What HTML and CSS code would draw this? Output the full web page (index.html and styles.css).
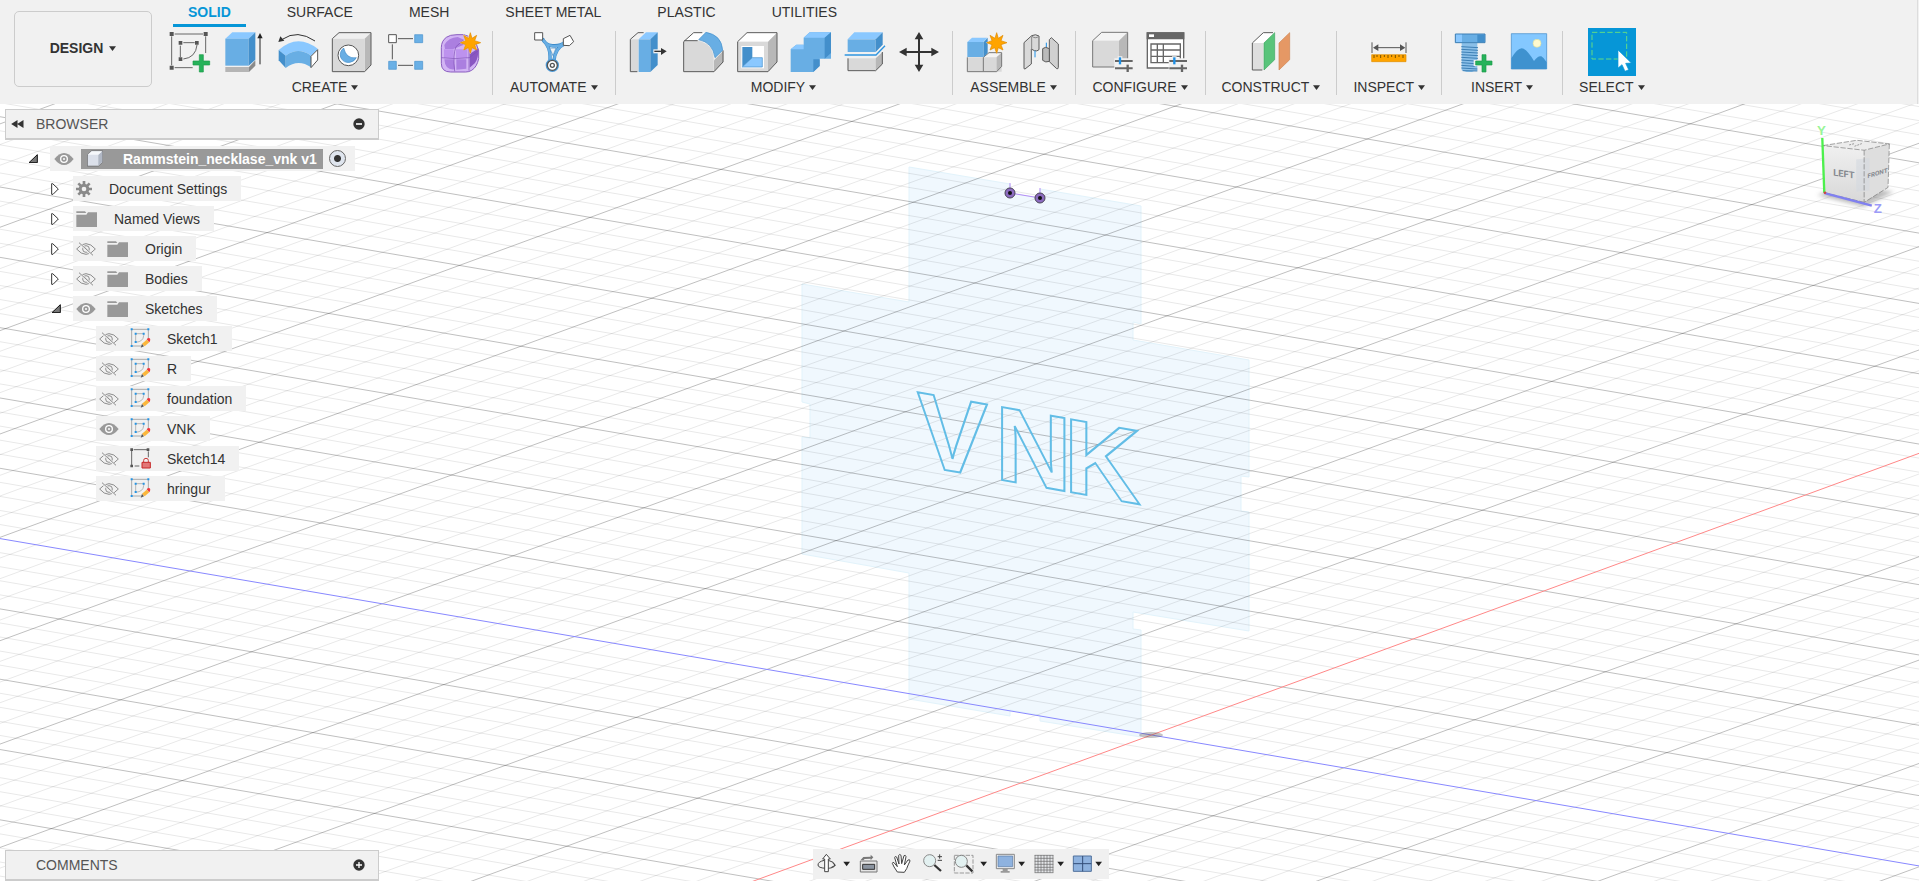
FILE: index.html
```
<!DOCTYPE html>
<html lang="en">
<head>
<meta charset="utf-8">
<title>Rammstein_necklase_vnk v1</title>
<link rel="stylesheet" href="styles.css">
</head>
<body>
<svg class="defs" aria-hidden="true">
  <symbol id="arrow" viewBox="0 0 18 14" preserveAspectRatio="none"><path d="M0 1h18L9 14z" fill="#333"/></symbol>
  <symbol id="open" viewBox="0 0 30 27"><path d="M28 2v24H3z" fill="#777" stroke="#111" stroke-width="3"/></symbol>
  <symbol id="closed" viewBox="0 0 24 36"><path d="M2 2v32h4L22 18 5 2z" fill="#fff" stroke="#333" stroke-width="3"/></symbol>
  <symbol id="eye" viewBox="0 0 60 40"><path d="M1 20Q15 2 30 2t29 18Q45 38 30 38T1 20z" fill="#999"/><circle cx="30" cy="20" r="10" fill="none" stroke="#fff" stroke-width="4"/><circle cx="30" cy="20" r="3" fill="#fff"/></symbol>
  <symbol id="eye-off" viewBox="0 0 60 40"><g fill="none" stroke="#8c8c8c" stroke-width="3"><path d="M2 20Q15 4 30 4t28 16Q45 36 30 36T2 20z"/><circle cx="30" cy="20" r="10"/><path d="M25 13l13 14"/></g><path d="M10 2l38 36" stroke="#f1f1f1" stroke-width="7"/><path d="M9 1l42 38" stroke="#8c8c8c" stroke-width="3"/></symbol>
  <symbol id="folder" viewBox="0 0 63 48"><path d="M1 1h26l4 5H1zM1 11h30l5-7h27v44H1z" fill="#999"/></symbol>
  <symbol id="gear" viewBox="0 0 48 48"><g stroke="#8a8a8a" stroke-width="8"><path d="M24 0v48M0 24h48M7 7l34 34M41 7L7 41"/></g><circle cx="24" cy="24" r="16" fill="#8a8a8a"/><circle cx="24" cy="24" r="7" fill="#f1f1f1"/></symbol>
  <symbol id="sketch" viewBox="388 56 63 63"><path d="M393 61v49M393 60h49M443 61v30M393 110h28" fill="none" stroke="#aaa" stroke-width="3"/><path d="M405 73h24v6q-1 18-24 20z" fill="none" stroke="#999" stroke-width="2"/><g fill="#2494e4"><path d="M390 57h6v6h-6zM440 57h6v6h-6zM390 107h6v6h-6zM402 70h6v6h-6zM426 70h6v6h-6zM402 95h6v6h-6z"/></g><path d="M420 115l4-12 6 8z" fill="#555"/><path d="M424 103l14-12 8 8-14 12z" fill="#fbb73c"/><path d="M438 90q5-6 9-3 4 4-1 12z" fill="#f0373c"/></symbol>
  <symbol id="sketch-locked" viewBox="388 56 63 63"><path d="M393 63v45M399 61h40M443 66v18M402 110h14" fill="none" stroke="#666" stroke-width="3"/><g fill="#555"><path d="M389 57h8v8h-8zM438 57h8v8h-8zM389 106h8v8h-8z"/></g><path d="M429 99v-6q0-6 7-6t7 6v6" fill="none" stroke="#c83a3a" stroke-width="3"/><path d="M424 99h25v17h-25z" fill="#e27777" stroke="#c62828" stroke-width="3"/></symbol>
</svg>

<header class="toolbar">
  <button class="workspace">DESIGN <svg class="caret"><use href="#arrow"/></svg></button>
  <div class="ribbon">
    <nav class="tabs" aria-label="Tool tabs">
      <button class="tab active">SOLID</button><button class="tab">SURFACE</button><button class="tab">MESH</button><button class="tab">SHEET METAL</button><button class="tab">PLASTIC</button><button class="tab">UTILITIES</button>
    </nav>
    <div class="groups">
      <section class="group first">
        <div class="tools">
          <button class="tool" aria-label="Create sketch"><svg viewBox="511 92 126 126"><g fill="none" stroke="#666" stroke-width="3"><path d="M519 108v87M528 101h85M621 108v50M528 202h54M545 136v34M554 127h34M595 134q-4 38-41 42"/></g><path d="M513 95h12v12h-12zM615 95h12v12h-12zM513 196h12v12h-12zM540 122h11v11h-11zM589 122h11v11h-11zM540 171h11v11h-11z" fill="#555"/><path d="M602 163h12v19h19v12h-19v21h-12v-21h-19v-12h19z" fill="#26b25a" stroke="#1b9c48" stroke-width="2"/></svg></button>
          <button class="tool" aria-label="Extrude"><svg viewBox="671 92 126 126"><path d="M678 200h71v15h-71z" fill="#b5b5b5"/><path d="M749 200l19-20v16l-19 19z" fill="#8a8a8a"/><path d="M678 115l21-19h69l-20 19z" fill="#8ac8ff"/><path d="M678 115h70v81h-70z" fill="#68aee4"/><path d="M748 115l20-19v82l-20 18z" fill="#438fcb"/><path d="M782 192V110" stroke="#222" stroke-width="3"/><path d="M782 98l-8 16h16z" fill="#222"/></svg></button>
          <button class="tool" aria-label="Revolve"><svg viewBox="833 92 126 126"><path d="M838 149q57-51 118-3l-21 20q-37-28-76 0z" fill="#8ac8ff"/><path d="M838 149l21 17v37l-21-23z" fill="#438fcb"/><path d="M859 166q38-28 76 0v35q-38-27-76 2z" fill="#68aee4"/><path d="M935 168l20-20v31l-20 23z" fill="#fff" stroke="#555" stroke-width="3"/><path d="M947 122q-53-36-98-5" fill="none" stroke="#333" stroke-width="3"/><path d="M837 125l6-17 12 13z" fill="#333"/></svg></button>
          <button class="tool" aria-label="Hole"><svg viewBox="997 92 126 126"><path d="M1001 115l20-18h96l-19 18z" fill="#efefef"/><path d="M1098 115l19-18v97l-19 20z" fill="#b8b8b8"/><path d="M1001 115h97v99h-97z" fill="#d9d9d9"/><path d="M1001 214v-99l20-18h96v97l-19 20z" fill="none" stroke="#5c5c5c" stroke-width="3"/><circle cx="1049" cy="165" r="31" fill="#fff" stroke="#555" stroke-width="3"/><path d="M1035 143q-14 12-9 28 8 18 28 15 14-3 19-14-30 5-38-29z" fill="#68aee4" stroke="#3d8ac8" stroke-width="2"/></svg></button>
          <button class="tool" aria-label="Pattern"><svg viewBox="1149 92 126 126"><path d="M1188 115h45M1188 195h45M1171 132v45" stroke="#555" stroke-width="3"/><path d="M1160 103h23v24h-23z" fill="#fff" stroke="#555" stroke-width="3"/><path d="M1238 103h24v24h-24zM1160 183h23v24h-23zM1238 183h24v24h-24z" fill="#6ab0e6" stroke="#4893cf" stroke-width="2"/></svg></button>
          <button class="tool" aria-label="Create form"><svg viewBox="1314 92 126 126"><path d="M1321 142q0-20 15-31 10-8 32-8h20q20 3 35 20l10 28v24q-5 25-21 35-8 5-18 5h-45q-28 0-28-26z" fill="#d2b4f4" stroke="#8a5dc0" stroke-width="3"/><path d="M1330 134q12-22 40-24l19 8-2 16-30 12h-25zM1330 177h28l4 30q-30 4-32-30zM1366 177h30v28l-30 3z" fill="#ab7fe0"/><path d="M1329 147h29v27h-29zM1365 147h34v27h-34z" fill="#bd92ee"/><path d="M1406 161l26-17q1 30-10 44l-16 14z" fill="#8956c2"/><path d="M1321 172q40 6 84 0l28-22M1361 213q-6-50 4-74l20-18M1404 211v-64l15-17" fill="none" stroke="#7d4eb5" stroke-width="2"/><path d="M1408 93l6 18 15-9-6 17 18 8-18 6 6 17-15-8-6 20-7-20-15 8 7-17-18-6 18-8-7-17 15 9z" fill="#f1f1f1"/><path d="M1408 97l5 17 14-9-6 16 18 6-18 6 6 16-14-7-5 17-6-17-14 7 6-16-16-6 16-6-6-16 15 9z" fill="#ffa400" stroke="#df8a00" stroke-width="2"/></svg></button>
        </div>
        <button class="label">CREATE <svg class="caret"><use href="#arrow"/></svg></button>
      </section>
      <section class="group roomy">
        <div class="tools">
          <button class="tool" aria-label="Automated modeling"><svg viewBox="161 92 126 126"><path d="M189 114q8 20 30 22 25 2 38-10M194 122q18 20 18 45v17M254 132q-27 12-30 50" fill="none" stroke="#3d8ac8" stroke-width="10"/><path d="M191 117q9 18 28 20 25 2 34-10M194 122q18 20 18 45v17M254 132q-27 12-30 50" fill="none" stroke="#68aee4" stroke-width="7"/><path d="M211 143h19l-9 23z" fill="#f1f1f1" stroke="#3d8ac8" stroke-width="2"/><path d="M166 97h24v22h-24zM252 115l20-10 11 19-13 12-18-1z" fill="#fff" stroke="#555" stroke-width="3"/><circle cx="219" cy="195" r="17" fill="#fff" stroke="#4b9ad8" stroke-width="6"/><circle cx="219" cy="195" r="15" fill="#fff" stroke="#555" stroke-width="4"/><circle cx="219" cy="195" r="6" fill="none" stroke="#555" stroke-width="4"/></svg></button>
        </div>
        <button class="label">AUTOMATE <svg class="caret"><use href="#arrow"/></svg></button>
      </section>
      <section class="group">
        <div class="tools">
          <button class="tool" aria-label="Press pull"><svg viewBox="451 92 126 126"><path d="M458 117h24v97h-24z" fill="#d9d9d9"/><path d="M498 97h-17l-23 20v97h21" fill="none" stroke="#5c5c5c" stroke-width="3"/><path d="M483 117l22-21h35l-22 21z" fill="#8ac8ff"/><path d="M483 117h35v98h-35z" fill="#68aee4"/><path d="M518 117l22-21v98l-22 21z" fill="#438fcb"/><path d="M527 153h30" stroke="#f1f1f1" stroke-width="12"/><path d="M530 153h25" stroke="#333" stroke-width="4"/><path d="M550 143l17 10-17 11z" fill="#333"/></svg></button>
          <button class="tool" aria-label="Fillet"><svg viewBox="611 92 126 126"><path d="M616 124l30-27h33l-23 24z" fill="#fff"/><path d="M616 121h42q46 8 48 54v40h-90z" fill="#d9d9d9"/><path d="M707 180l28-29v34l-28 29z" fill="#b8b8b8"/><path d="M672 97h-26l-30 27v90h91l27-29v-35M618 121h40" fill="none" stroke="#5c5c5c" stroke-width="3"/><path d="M661 118l22-22q47 8 50 54l-23 22q-7-46-49-54z" fill="#68aee4" stroke="#438fcb" stroke-width="2"/></svg></button>
          <button class="tool" aria-label="Shell"><svg viewBox="773 92 126 126"><path d="M778 124l28-27h90l-27 27z" fill="#fff"/><path d="M778 124h91v90h-91z" fill="#d9d9d9"/><path d="M869 124l27-27v87l-27 30z" fill="#b8b8b8"/><path d="M778 214v-90l28-27h90v88l-27 29z" fill="none" stroke="#5c5c5c" stroke-width="3"/><path d="M789 137h68v67h-68z" fill="#fff"/><path d="M792 140h30v32l-30 28z" fill="#438fcb"/><path d="M792 200l30-28h30v28z" fill="#8ac8ff" stroke="#438fcb" stroke-width="2"/></svg></button>
          <button class="tool" aria-label="Combine"><svg viewBox="935 92 126 126"><path d="M937 147l17-14h22v-21l18-16h64v79h-34v22l-19 18h-68z" fill="#68aee4"/><path d="M976 112l18-16h64l-19 16zM937 147l17-14h22v14z" fill="#8ac8ff"/><path d="M1039 112l19-16v62l-19 17zM1005 177h19v20l-19 18z" fill="#438fcb"/></svg></button>
          <button class="tool" aria-label="Split body"><svg viewBox="1096 92 126 126"><path d="M1107 117l20-21h85l-21 21z" fill="#8ac8ff"/><path d="M1107 117h84v38h-84z" fill="#68aee4"/><path d="M1191 117l21-21v37l-21 22z" fill="#438fcb"/><path d="M1107 174h84v37h-84z" fill="#d9d9d9"/><path d="M1191 174l21-19v36l-21 20z" fill="#b8b8b8"/><path d="M1108 174v37h83l20-20v-36" fill="none" stroke="#5c5c5c" stroke-width="3"/><path d="M1098 164h94l27-28" fill="none" stroke="#f1f1f1" stroke-width="10"/><path d="M1098 164h94l27-28" fill="none" stroke="#2f95e0" stroke-width="4"/></svg></button>
          <button class="tool" aria-label="Move"><svg viewBox="1257 92 126 126"><path d="M1320 110v92M1275 155h90" stroke="#333" stroke-width="6"/><path d="M1320 95l13 22h-26zM1320 215l13-22h-26zM1260 155l23-13v26zM1380 155l-23-13v26z" fill="#333"/></svg></button>
        </div>
        <button class="label">MODIFY <svg class="caret"><use href="#arrow"/></svg></button>
      </section>
      <section class="group roomy">
        <div class="tools">
          <button class="tool" aria-label="New component"><svg viewBox="79 92 126 126"><path d="M83 171h103v43H83z" fill="#d9d9d9"/><path d="M132 170l16-13h38l-15 13z" fill="#f4f4f4"/><path d="M171 170l15-13v41l-15 16z" fill="#b8b8b8"/><path d="M83 171v43h88l15-16v-41h-38l-17 14v42" fill="none" stroke="#777" stroke-width="3"/><path d="M83 125h49v45H83z" fill="#68aee4"/><path d="M83 125l14-13h46l-12 13z" fill="#8ac8ff"/><path d="M132 125l12-13v46l-12 12z" fill="#438fcb"/><path d="M171 93l6 18 15-9-6 17 18 8-18 6 6 17-15-8-6 20-7-20-15 8 7-17-18-6 18-8-7-17 15 9z" fill="#f1f1f1"/><path d="M171 97l5 17 14-9-6 16 18 6-18 6 6 16-14-7-5 17-6-17-14 7 6-16-16-6 16-6-6-16 15 9z" fill="#ffa400" stroke="#df8a00" stroke-width="2"/></svg></button>
          <button class="tool" aria-label="Joint"><svg viewBox="241 92 126 126"><path d="M253 127l23-21q12-6 22 1v41q-6 6-14 3l-9-5v45l-19 15q-3 1-3-3z" fill="#d9d9d9" stroke="#5c5c5c" stroke-width="3"/><path d="M276 107q10 10 22 1M276 108v40" fill="none" stroke="#888" stroke-width="3"/><path d="M286 151v20M320 127v15" stroke="#1c8fe6" stroke-width="3"/><path d="M329 118l6-6 21 19v70q0 6-5 4l-22-21z" fill="#d0d0d0" stroke="#5c5c5c" stroke-width="3"/><path d="M309 145q8-8 20 0v38q-11 5-20-3z" fill="#bbb" stroke="#5c5c5c" stroke-width="3"/></svg></button>
        </div>
        <button class="label">ASSEMBLE <svg class="caret"><use href="#arrow"/></svg></button>
      </section>
      <section class="group roomy">
        <div class="tools">
          <button class="tool" aria-label="Configure design"><svg viewBox="459 92 126 126"><path d="M461 121l27-25h78l-26 25z" fill="#f4f4f4"/><path d="M461 121h79v79h-79z" fill="#d9d9d9"/><path d="M540 121l26-25v80l-26 24z" fill="#b8b8b8"/><path d="M461 200v-79l27-25h78v80l-26 24z" fill="none" stroke="#777" stroke-width="3"/><path d="M526 174h10v-6h14v6h34v44h-30v-8h-28z" fill="#f1f1f1"/><path d="M528 182h53M528 204h53" stroke="#666" stroke-width="6"/><path d="M543 171v21" stroke="#1c8fe6" stroke-width="7"/><path d="M566 193v22" stroke="#666" stroke-width="7"/></svg></button>
          <button class="tool" aria-label="Configuration table"><svg viewBox="620 92 126 126"><path d="M624 98h109v105H624z" fill="#fff" stroke="#666" stroke-width="4"/><path d="M622 96h113v21H622z" fill="#666"/><path d="M629 102h15v8h-15z" fill="#fff"/><path d="M635 131h88v56h-88zM635 149h88M635 168h88M654 131v56M672 131v56" fill="none" stroke="#666" stroke-width="4"/><path d="M688 174h10v-6h14v6h34v44h-58z" fill="#f1f1f1"/><path d="M690 182h53M690 204h53" stroke="#666" stroke-width="6"/><path d="M705 171v21" stroke="#1c8fe6" stroke-width="7"/><path d="M728 193v22" stroke="#666" stroke-width="7"/></svg></button>
        </div>
        <button class="label">CONFIGURE <svg class="caret"><use href="#arrow"/></svg></button>
      </section>
      <section class="group">
        <div class="tools">
          <button class="tool" aria-label="Offset plane"><svg viewBox="931 92 126 126"><path d="M938 128l33-31h32l-33 31z" fill="#fff"/><path d="M938 128h32v81h-32z" fill="#dedede"/><path d="M1000 97h-29l-33 31v81h30" fill="none" stroke="#5c5c5c" stroke-width="3"/><path d="M973 128l32-31v81l-32 31z" fill="#58c47a" stroke="#3fa862" stroke-width="2"/><path d="M1018 128l32-31v81l-32 31z" fill="#e59865" stroke="#cf8450" stroke-width="2"/></svg></button>
        </div>
        <button class="label">CONSTRUCT <svg class="caret"><use href="#arrow"/></svg></button>
      </section>
      <section class="group">
        <div class="tools">
          <button class="tool" aria-label="Measure"><svg viewBox="1283 92 126 126"><path d="M1295 126v32M1397 126v32M1305 142h82" stroke="#555" stroke-width="3"/><path d="M1298 142l16-10v20zM1395 142l-16-10v20z" fill="#555"/><path d="M1294 163h103v21h-103z" fill="#ffa400" stroke="#e08e00" stroke-width="2"/><path d="M1301 164v9M1310 164v6M1321 164v9M1332 164v6M1343 164v9M1354 164v6M1365 164v9M1376 164v6M1388 164v9" stroke="#7a5200" stroke-width="3"/></svg></button>
        </div>
        <button class="label">INSPECT <svg class="caret"><use href="#arrow"/></svg></button>
      </section>
      <section class="group">
        <div class="tools">
          <button class="tool" aria-label="Insert fastener"><svg viewBox="170 92 126 126"><path d="M193 128h47v84h-10l-6 3h-16l-15-5z" fill="#8abfe8"/><path d="M174 101h89v26h-89z" fill="#68aee4" stroke="#3d7fb5" stroke-width="3"/><path d="M176 103h18v22h-18z" fill="#8ac8ff"/><path d="M240 103h22v22h-22z" fill="#438fcb"/><path d="M192 139l50 3M192 147l50 3M192 155l50 3M192 163l50 3M192 171l50 3M192 179l40 3M192 187l40 3M192 195l40 3M192 203l48 3M196 211l44 1" stroke="#3d7fb5" stroke-width="3"/><path d="M229 179h20v-20h22v20h17v18h-17v21h-22v-21h-20z" fill="#f1f1f1"/><path d="M254 163h12v19h18v12h-18v21h-12v-21h-19v-12h19z" fill="#26b25a" stroke="#1b9c48" stroke-width="2"/></svg></button>
          <button class="tool" aria-label="Insert image"><svg viewBox="321 92 126 126"><path d="M331 100h106v106H331z" fill="#84c8ff" stroke="#3d8ac8" stroke-width="2"/><path d="M331 174q18-30 31-30 14 0 37 38 12-17 22-14 8 4 16 18v20H331z" fill="#3f92cf"/><circle cx="408" cy="129" r="12" fill="#ffface" stroke="#d9dfa0" stroke-width="2"/></svg></button>
        </div>
        <button class="label">INSERT <svg class="caret"><use href="#arrow"/></svg></button>
      </section>
      <section class="group last">
        <div class="tools">
          <button class="tool selected" aria-label="Select"><svg viewBox="562 84 144 144"><path d="M574 97h104v80H574z" fill="none" stroke="#62dc84" stroke-width="3" stroke-dasharray="16 7"/><path d="M652 150v54l12-10 9 20 11-5-9-19 17-1z" fill="#fff" stroke="#0696d7" stroke-width="2"/></svg></button>
        </div>
        <button class="label">SELECT <svg class="caret"><use href="#arrow"/></svg></button>
      </section>
    </div>
  </div>
</header>

<main class="viewport">
  <svg class="scene" viewBox="0 104 1919 777" preserveAspectRatio="xMidYMid slice" aria-label="Model canvas">
    <path class="region" d="M909 167l101 17v9l30 5v-9l101 17v118l-8-2v18l116 20v117l-8-1v35l8 1v119l-116-19v17l8 1v107l-101-16v-6l-30-5v6l-101-17V573l-107-19V437l8 1v-34l-8-2V284l107 18z"/>
    <path class="minor" id="minor"/>
    <path class="major" id="major"/>
    <path class="axis z" id="axis-z"/>
    <path class="axis x" id="axis-x"/>
    <ellipse cx="1151" cy="735" rx="12" ry="3" fill="#555" opacity=".35"/>
    <g class="sketch-text" transform="translate(917 384) skewY(10)"><text x="0" y="81">V</text><text x="78" y="81">N</text><text x="147" y="81">K</text></g>
    <path d="M1010 183v8M1040 188v8M1010 193l30 5" stroke="#b48cf5" stroke-width="1"/>
    <g fill="#8c6bc0" stroke="#4a4555" stroke-width="1"><circle cx="1010" cy="193" r="5"/><circle cx="1040" cy="198" r="5"/></g>
    <circle cx="1010" cy="193" r="2" fill="#111"/><circle cx="1040" cy="198" r="2" fill="#111"/>
  </svg>

  <aside class="browser">
    <div class="panel-head">
      <button class="icon-btn" aria-label="Collapse browser"><svg class="rewind" viewBox="0 0 38 24"><path d="M19 0v24L0 12zM37 0v24L18 12z" fill="#333"/></svg></button>
      <span>BROWSER</span>
      <button class="icon-btn end" aria-label="Minimize"><svg class="round" viewBox="0 0 36 36"><circle cx="18" cy="18" r="17" fill="#333"/><path d="M9 18h18" stroke="#fff" stroke-width="5"/></svg></button>
    </div>
    <ul class="tree">
      <li class="row root"><button class="twist" aria-label="Collapse"><svg class="open"><use href="#open"/></svg></button><div class="cell"><button class="vis" aria-label="Hide"><svg class="eye"><use href="#eye"/></svg></button><div class="doc"><svg class="cube" viewBox="0 0 48 48"><path d="M1 13L14 1h33v34L34 47H1z" fill="#dbe0ea" stroke="#555" stroke-width="2"/><path d="M34 13L46 2v32L34 46z" fill="#b0b7c4"/><path d="M2 13L14 2h31L34 13z" fill="#f6f8fb"/></svg><strong>Rammstein_necklase_vnk v1</strong></div><label class="active-doc"><input type="radio" name="active" checked aria-label="Activate component"></label></div></li>
      <li class="row l1"><button class="twist" aria-label="Expand"><svg class="closed"><use href="#closed"/></svg></button><div class="cell"><svg class="gear"><use href="#gear"/></svg><span>Document Settings</span></div></li>
      <li class="row l1"><button class="twist" aria-label="Expand"><svg class="closed"><use href="#closed"/></svg></button><div class="cell"><svg class="folder"><use href="#folder"/></svg><span>Named Views</span></div></li>
      <li class="row l1"><button class="twist" aria-label="Expand"><svg class="closed"><use href="#closed"/></svg></button><div class="cell"><button class="vis" aria-label="Show"><svg class="eye"><use href="#eye-off"/></svg></button><svg class="folder"><use href="#folder"/></svg><span>Origin</span></div></li>
      <li class="row l1"><button class="twist" aria-label="Expand"><svg class="closed"><use href="#closed"/></svg></button><div class="cell"><button class="vis" aria-label="Show"><svg class="eye"><use href="#eye-off"/></svg></button><svg class="folder"><use href="#folder"/></svg><span>Bodies</span></div></li>
      <li class="row l1"><button class="twist" aria-label="Collapse"><svg class="open"><use href="#open"/></svg></button><div class="cell"><button class="vis" aria-label="Hide"><svg class="eye"><use href="#eye"/></svg></button><svg class="folder"><use href="#folder"/></svg><span>Sketches</span></div></li>
      <li class="row l2"><div class="cell"><button class="vis" aria-label="Show"><svg class="eye"><use href="#eye-off"/></svg></button><svg class="sk"><use href="#sketch"/></svg><span>Sketch1</span></div></li>
      <li class="row l2"><div class="cell"><button class="vis" aria-label="Show"><svg class="eye"><use href="#eye-off"/></svg></button><svg class="sk"><use href="#sketch"/></svg><span>R</span></div></li>
      <li class="row l2"><div class="cell"><button class="vis" aria-label="Show"><svg class="eye"><use href="#eye-off"/></svg></button><svg class="sk"><use href="#sketch"/></svg><span>foundation</span></div></li>
      <li class="row l2"><div class="cell"><button class="vis" aria-label="Hide"><svg class="eye"><use href="#eye"/></svg></button><svg class="sk"><use href="#sketch"/></svg><span>VNK</span></div></li>
      <li class="row l2"><div class="cell"><button class="vis" aria-label="Show"><svg class="eye"><use href="#eye-off"/></svg></button><svg class="sk"><use href="#sketch-locked"/></svg><span>Sketch14</span></div></li>
      <li class="row l2"><div class="cell"><button class="vis" aria-label="Show"><svg class="eye"><use href="#eye-off"/></svg></button><svg class="sk"><use href="#sketch"/></svg><span>hringur</span></div></li>
    </ul>
  </aside>

  <svg class="viewcube" viewBox="1240 360 250 290" aria-label="View cube">
    <defs><filter id="soft"><feGaussianBlur stdDeviation="7"/></filter><linearGradient id="face" x2="0" y2="1"><stop stop-color="#f0f0f0"/><stop offset="1" stop-color="#d8d8d8"/></linearGradient></defs>
    <path d="M1250 585l90-30 140 20-90 45z" fill="#777" opacity=".5" filter="url(#soft)"/>
    <path d="M1267 436l102-16 98 11-76 19z" fill="#ececec"/>
    <path d="M1267 436l124 14v157l-119-29z" fill="url(#face)"/>
    <path d="M1391 450l76-19-4 131-72 45z" fill="#dedede"/>
    <path d="M1367 478l40-5v98l-40 4z" fill="#d3d8e0" opacity=".6"/>
    <path d="M1267 436l102-16 98 11-76 19zM1391 450v157l72-45 4-131M1391 607l-119-29" fill="none" stroke="#777" stroke-width="2" stroke-dasharray="16 5"/>
    <path d="M1346 434l16-4M1362 438l22-8" stroke="#999" stroke-width="3" stroke-dasharray="6 3"/>
    <g class="cube-text"><text transform="translate(1298 526) skewY(8)">LEFT</text><text class="front" transform="translate(1401 534) skewY(-16)">FRONT</text></g>
    <path d="M1265 413l6 165" stroke="#4df04d" stroke-width="7"/><path d="M1272 579l142 38" stroke="#8080f0" stroke-width="7"/><circle cx="1273" cy="578" r="4" fill="#c44"/>
    <g class="axis-text"><text x="1249" y="404" fill="#98f598">Y</text><text x="1420" y="639" fill="#9c9cf8">Z</text></g>
  </svg>

  <section class="comments panel-head">
    <span>COMMENTS</span>
    <button class="icon-btn end" aria-label="Expand comments"><svg class="round" viewBox="0 0 36 36"><circle cx="18" cy="18" r="17" fill="#333"/><path d="M9 18h18M18 9v18" stroke="#fff" stroke-width="4"/></svg></button>
  </section>

  <nav class="navbar" aria-label="Navigation">
    <button class="orbit" aria-label="Orbit"><svg viewBox="105 988 105 90"><g fill="none" stroke="#444" stroke-width="3"><path d="M133 1022q-19 4-19 14 0 9 25 10 24 0 26-10-1-9-20-14M158 1030l8 7-12 6"/><path d="M134 1056v-38h-6l11-14 12 14h-6v38z" fill="#fff"/></g><path d="M190 1026h20l-10 14z" fill="#222"/></svg></button>
    <button aria-label="Look at"><svg viewBox="228 988 72 90"><path d="M238 1024h50v33h-50z" fill="#e4e4e4" stroke="#777" stroke-width="3"/><path d="M245 1034h36v15h-36z" fill="#8b94a0" stroke="#333" stroke-width="3"/><path d="M239 1021l8-9 22-1v-6l8 8-8 9v-5l-18 1-4 4z" fill="#777"/></svg></button>
    <button aria-label="Pan"><svg viewBox="324 988 72 90"><path d="M349 1057q-12-17-15-26 1-6 6-1l9 11-8-27q1-6 6-2l7 21-1-26q3-5 7 0l2 25 7-24q5-3 6 3l-5 25 11-15q6-3 6 3-6 12-10 23l-7 11z" fill="#fff" stroke="#444" stroke-width="3"/></svg></button>
    <button aria-label="Zoom"><svg viewBox="420 988 72 90"><path d="M463 1036l20 18" stroke="#333" stroke-width="7"/><circle cx="449" cy="1023" r="18" fill="#e3f1f1" stroke="#888" stroke-width="3"/><path d="M473 1011h13M479 1004v13M473 1022h13" stroke="#444" stroke-width="3"/></svg></button>
    <button class="fit" aria-label="Fit"><svg viewBox="519 988 105 90"><path d="M526 1007h56v53h-56z" fill="none" stroke="#999" stroke-width="3" stroke-dasharray="13 4"/><path d="M562 1037l18 18" stroke="#333" stroke-width="7"/><circle cx="547" cy="1025" r="18" fill="#e3f1f1" stroke="#888" stroke-width="3"/><path d="M604 1026h20l-10 14z" fill="#222"/></svg></button>
    <button class="menu" aria-label="Display settings"><svg viewBox="645 988 93 90"><path d="M652 1004h54v43h-54z" fill="#eee" stroke="#888" stroke-width="3"/><path d="M657 1009h44v32h-44z" fill="#8eb2df" stroke="#5878a5" stroke-width="2"/><path d="M671 1047h15v7h6v5h-27v-5h6z" fill="#999"/><path d="M718 1026h20l-10 14z" fill="#222"/></svg></button>
    <button class="menu" aria-label="Grid and snaps"><svg viewBox="761 988 93 90"><path d="M767 1006h54v53h-54z" fill="#e3e5e8"/><path d="M767 1006v53M776 1006v53M785 1006v53M794 1006v53M803 1006v53M812 1006v53M821 1006v53M766 1007h56M766 1016h56M766 1025h56M766 1034h56M766 1043h56M766 1051h56M766 1059h56" stroke="#666" stroke-width="2"/><path d="M834 1026h20l-10 14z" fill="#222"/></svg></button>
    <button class="menu" aria-label="Viewports"><svg viewBox="876 988 93 90"><path d="M883 1009h54v46h-54z" fill="#8eb2df" stroke="#50709c" stroke-width="3"/><path d="M911 1009v46M883 1032h54" stroke="#334e78" stroke-width="3"/><path d="M949 1026h20l-10 14z" fill="#222"/></svg></button>
  </nav>
</main>
<script src="grid.js"></script>
</body>
</html>
```
FILE: styles.css
```
* { box-sizing: border-box; }
body { margin: 0; height: 100vh; display: flex; flex-direction: column; overflow: hidden; background: #fff; font: 14px/16px "Liberation Sans", Arial, sans-serif; color: #333; }
button { border: 0; padding: 0; margin: 0; background: none; font: inherit; color: inherit; cursor: pointer; }
svg { display: block; flex: none; }
.defs { position: absolute; width: 0; height: 0; }

.toolbar { display: flex; flex: none; height: 104px; background: #f1f1f1; }
.workspace { display: flex; align-items: center; justify-content: center; gap: 6px; width: 138px; height: 76px; margin: 11px 0 0 14px; padding-bottom: 2px; border: 1px solid #ccc; border-radius: 5px; font-weight: bold; }
.caret { width: 7px; height: 5px; }
.ribbon { flex: 1; display: flex; flex-direction: column; border-right: 1px solid #ddd; margin-right: 1px; }
.tabs { display: flex; gap: 26px; padding-left: 21px; height: 27px; }
.tab { padding: 0 15px 1px; border-bottom: 3px solid transparent; height: 27px; }
.tab.active { color: #0696d7; font-weight: bold; border-bottom-color: #0696d7; }
.groups { display: flex; padding-top: 4px; }
.group { display: flex; flex-direction: column; align-items: center; height: 64px; padding: 0 12px; border-right: 1px solid #ccc; }
.group.first { padding: 0 11px 0 17px; }
.group.last { border: 0; }
.tools { display: flex; gap: 12px; height: 42px; align-items: center; }
.tool { width: 42px; height: 42px; }
.tool svg { width: 42px; height: 42px; }
.tool.selected { width: 48px; height: 48px; background: #0696d7; }
.tool.selected svg { width: 48px; height: 48px; }
.label { display: flex; align-items: center; gap: 4px; padding: 6px 4px; }
.group.roomy { padding: 0 13px; }

.viewport { position: relative; flex: 1; min-height: 0; }
.scene { position: absolute; inset: 0; width: 100%; height: 100%; }
.region { fill: #f0f8fe; stroke: #e2f3fb; }
.minor, .major, .axis { fill: none; }
.minor { stroke: #000; stroke-opacity: .09; stroke-width: 1px; }
.major { stroke: #000; stroke-opacity: .25; stroke-width: 1px; }
.axis { stroke-width: 1px; }
.axis.z { stroke: #8888ff; }
.axis.x { stroke: #ff8888; }
.sketch-text { font: bold 106px "Liberation Sans", Arial, sans-serif; fill: none; stroke: #62bde6; stroke-width: 2px; }

.panel-head { display: flex; align-items: center; height: 31px; padding: 0 13px 0 5px; background: #f1f1f1; border: 1px solid #ccc; border-bottom-width: 2px; color: #555; }
.icon-btn.end { margin-left: auto; }
.rewind { width: 13px; height: 8px; }
.round { width: 12px; height: 12px; }
.browser { position: absolute; left: 5px; top: 5px; width: 374px; }
.browser .panel-head { gap: 12px; }
.comments { position: absolute; left: 5px; bottom: 0; width: 374px; padding-left: 30px; }

.tree { list-style: none; margin: 6px 0 0; padding: 0; display: flex; flex-direction: column; gap: 5px; }
.row { display: flex; height: 25px; }
.row.root { padding-left: 23px; }
.row.l1 { padding-left: 46px; }
.row.l2 { padding-left: 91px; }
.twist { width: 22px; }
.open { width: 10px; height: 9px; }
.closed { width: 8px; height: 12px; }
.cell { display: flex; align-items: center; padding: 0 14px 0 3px; background: #f1f1f1; }
.eye { width: 20px; height: 14px; }
.vis + .folder, .vis + .sk { margin-left: 11px; }
.folder { width: 21px; height: 16px; margin-right: 17px; }
.gear { width: 16px; height: 16px; margin-right: 17px; }
.sk { width: 21px; height: 21px; margin-right: 16px; }
.root .cell { padding: 0 9px 0 4px; }
.doc { display: flex; align-items: center; height: 20px; margin-left: 7px; padding: 0 6px; background: #999; color: #fff; }
.cube { width: 16px; height: 17px; margin-right: 20px; }
.active-doc { display: flex; margin-left: 6px; }
.active-doc input { appearance: none; width: 17px; height: 17px; margin: 0; border: 1px solid #666; border-radius: 50%; background: radial-gradient(circle, #333 0 3px, #dfe5ee 4px 100%); }

.viewcube { position: absolute; top: 16px; right: 22px; width: 83px; height: 97px; }
.cube-text { font: bold 28px Roboto, "Liberation Sans", sans-serif; fill: #85898f; }
.cube-text .front { font-size: 19px; }
.axis-text { font: bold 40px "Liberation Sans", sans-serif; }

.navbar { position: absolute; left: calc(50% + 1px); bottom: 2px; transform: translateX(-50%); height: 30px; padding: 0 6px 0 2px; display: flex; justify-content: space-between; width: 296px; background: #f0f0f0; }
.navbar svg { width: 24px; height: 30px; }
.navbar .orbit svg, .navbar .fit svg { width: 35px; }
.navbar .menu svg { width: 31px; }
```
FILE: grid.js
```
// Draws the ground-plane grid. Steps are one major cell along each model axis.
const origin = [1151.5, 735];
const z = [192.3, 32.8];
const x = [130.8, -48];
const reach = 16;

function line(base, step, k, dir) {
  const cx = base[0] + step[0] * k, cy = base[1] + step[1] * k;
  return `M${cx - dir[0] * reach} ${cy - dir[1] * reach}L${cx + dir[0] * reach} ${cy + dir[1] * reach}`;
}

let minor = "", major = "";
for (let i = -70; i <= 70; i++) {
  if (i === 0) continue;
  const d = line(origin, x, i / 5, z) + line(origin, z, i / 5, x);
  if (i % 5 === 0) major += d; else minor += d;
}
document.getElementById("minor").setAttribute("d", minor);
document.getElementById("major").setAttribute("d", major);
document.getElementById("axis-z").setAttribute("d", line(origin, x, 0, z));
document.getElementById("axis-x").setAttribute("d", line(origin, z, 0, x));
```
